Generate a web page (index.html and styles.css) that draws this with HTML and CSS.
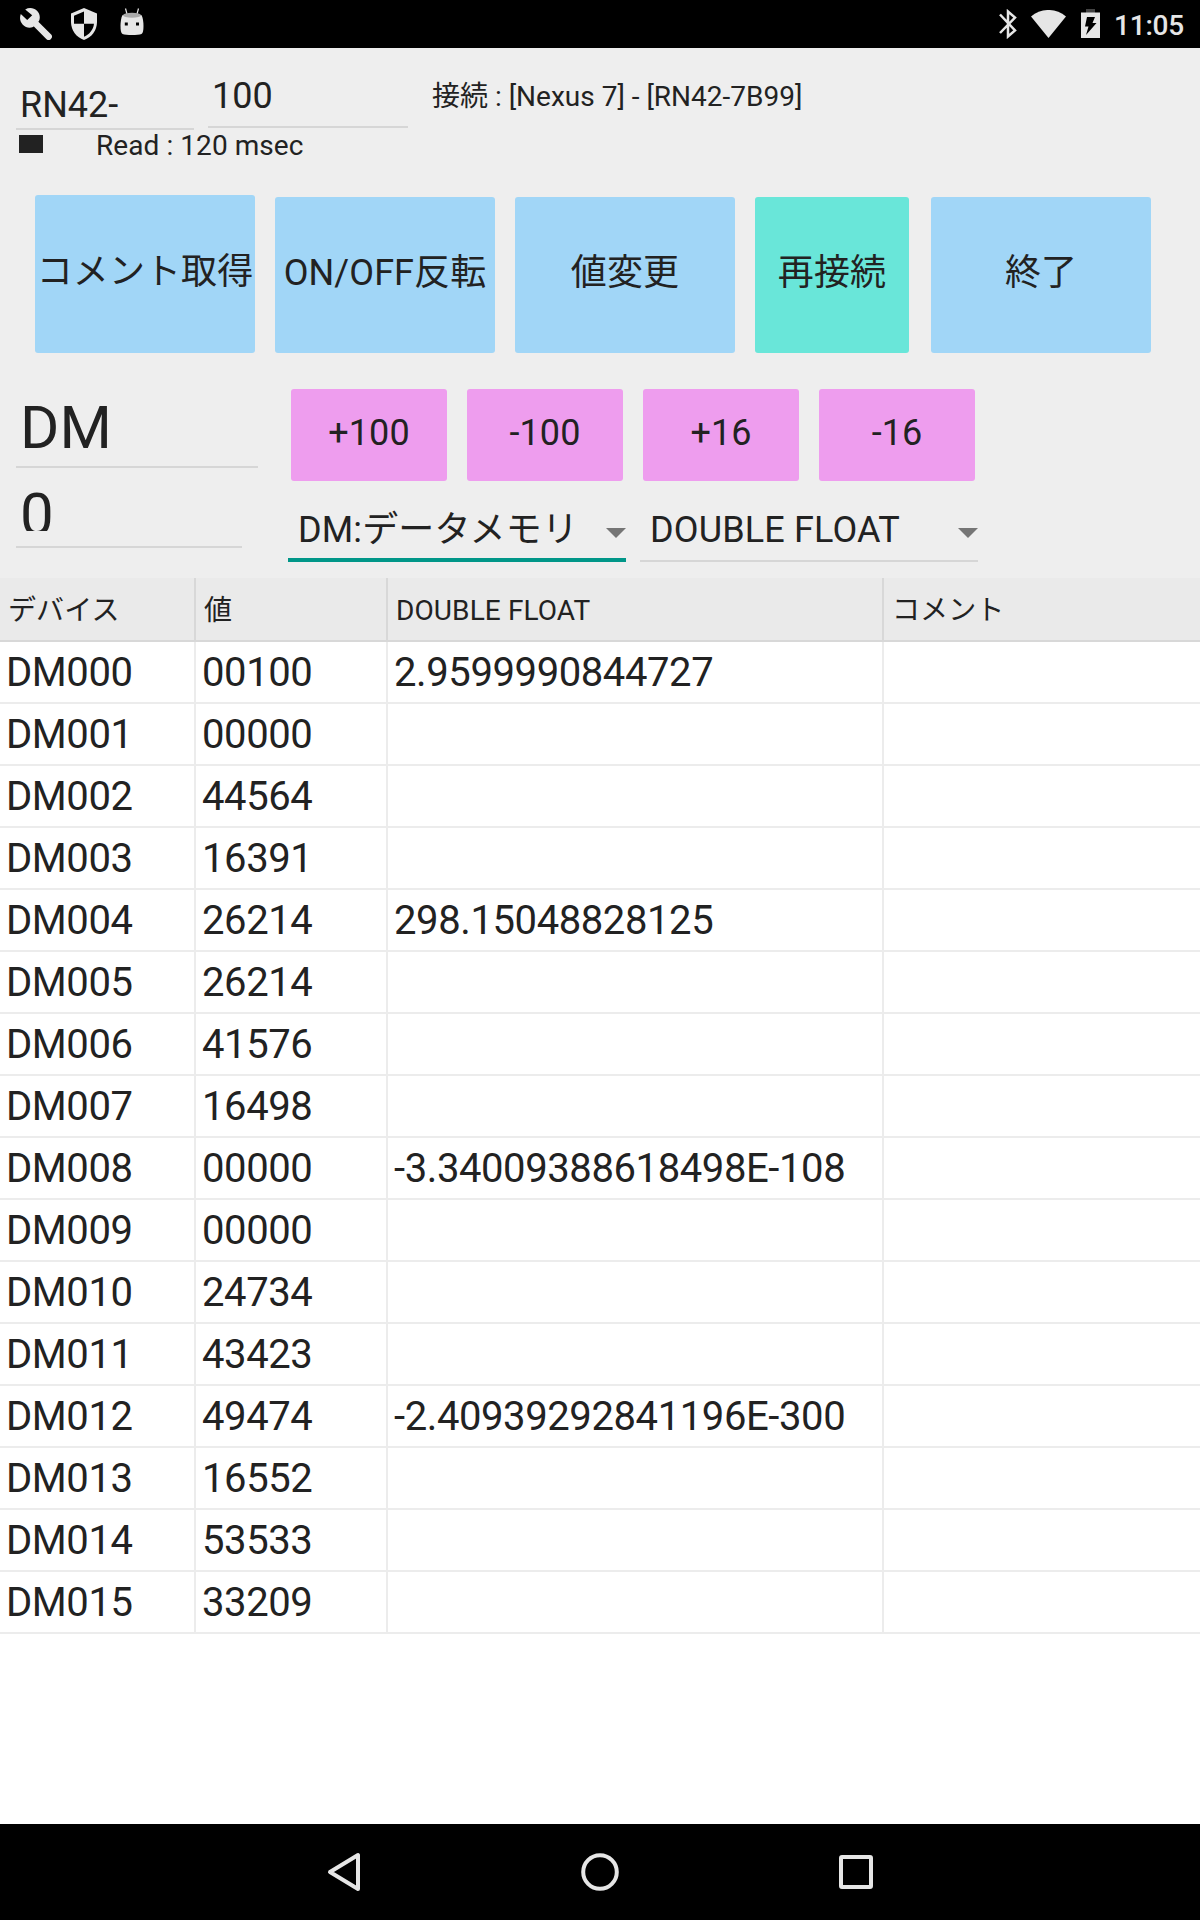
FILE: index.html
```
<!DOCTYPE html>
<html lang="ja">
<head>
    <meta charset="UTF-8">
    <meta name="viewport" content="width=device-width, initial-scale=1.0">
    <title>デバイスモニタ</title>
    <link rel="stylesheet" href="styles.css">
</head>
<body>
    <div class="status-bar">
        <svg class="icon-wrench" width="32" height="32" viewBox="0 0 32 32">
            <path d="M14 14L28.6 28.6" stroke="#e6e6e6" stroke-width="6.6" stroke-linecap="round"/>
            <path d="M5.2 1.5L12.2 7.2L7.2 12L.8 6C-.6 10-.1 13.600 2.800 16.700C5.800 19.800 9.600 20.400 13 19L19 13C20.500 9.400 19.900 5.600 17 2.800C13.700-.4 9-.7 5.200 1.500z" fill="#e6e6e6"/>
        </svg>
        <svg class="icon-shield" width="26" height="32" viewBox="0 0 26 32">
            <path d="M13 0L26 5.500V14C26 22.500 20.500 29.500 13 32C5.500 29.500 0 22.500 0 14V5.500z" fill="#e6e6e6"/>
            <path d="M13 3.500V15.700H3V7.700z"/>
            <path d="M13 15.700H23C22.300 21.500 18.500 26.500 13 28.700z"/>
        </svg>
        <svg class="icon-android" width="24" height="28" viewBox="0 0 24 28">
            <path d="M5.500 .5L7 6M18.500 .5L17 6" stroke="#e6e6e6" stroke-width="1.200"/>
            <path d="M3 7H21C22.500 7 23.500 14 23.500 18C23.500 22 23 25 21.500 26C18 27.300 6 27.300 2.500 26C1 25 .5 22 .5 18C.5 14 1.500 7 3 7z" fill="#e6e6e6"/>
            <ellipse cx="12" cy="7.300" rx="9" ry="2.500" fill="#aaa"/>
            <rect x="4.800" y="14.500" width="3" height="3"/>
            <rect x="16" y="14.500" width="3" height="3"/>
        </svg>
        <div class="status-right">
            <svg class="icon-bluetooth" width="18" height="30" viewBox="0 0 18 30">
                <path d="M1 5.500L16 21.500L9 27.500V2.500L16 8.500L1 24" fill="none" stroke="#e6e6e6" stroke-width="2.500"/>
            </svg>
            <svg class="icon-wifi" width="35" height="28" viewBox="0 0 35 28">
                <path d="M0 6.500C10-2.200 25-2.200 35 6.500L17.500 28z" fill="#e6e6e6"/>
            </svg>
            <svg class="icon-battery" width="19" height="29" viewBox="0 0 19 29">
                <rect x="5" y="0" width="9" height="4" fill="#444"/>
                <rect x="0" y="3.500" width="19" height="25.500" fill="#e6e6e6"/>
                <path d="M6 8H14L11.500 14H15.500L5 26L7.500 17.500H4z"/>
            </svg>
            <span class="clock">11:05</span>
        </div>
    </div>

    <div class="panel">
        <div class="connect">
            <div class="field field-prefix">RN42-</div>
            <div class="field field-number">100</div>
            <div class="connect-status">接続 : [Nexus 7] - [RN42-7B99]</div>
        </div>
        <div class="read">
            <div class="read-mark"></div>
            <div>Read : 120 msec</div>
        </div>

        <div class="commands">
            <button type="button" class="command first">コメント取得</button>
            <button type="button" class="command">ON/OFF反転</button>
            <button type="button" class="command">値変更</button>
            <button type="button" class="command reconnect">再接続</button>
            <button type="button" class="command exit">終了</button>
        </div>

        <div class="address">
            <div class="address-fields">
                <div class="field field-device">DM</div>
                <div class="field field-address"><div class="clip">0</div></div>
            </div>
            <div class="address-tools">
                <div class="steps">
                    <button type="button" class="step">+100</button>
                    <button type="button" class="step">-100</button>
                    <button type="button" class="step">+16</button>
                    <button type="button" class="step">-16</button>
                </div>
                <div class="spinners">
                    <div class="spinner active"><span>DM:データメモリ</span><i class="arrow"></i></div>
                    <div class="spinner"><span>DOUBLE FLOAT</span><i class="arrow"></i></div>
                </div>
            </div>
        </div>
    </div>

    <table>
        <colgroup>
            <col class="col-device">
            <col class="col-value">
            <col class="col-double">
            <col>
        </colgroup>
        <thead>
            <tr><th>デバイス</th><th>値</th><th>DOUBLE FLOAT</th><th>コメント</th></tr>
        </thead>
        <tbody>
            <tr><td>DM000</td><td>00100</td><td>2.9599990844727</td><td></td></tr>
            <tr><td>DM001</td><td>00000</td><td></td><td></td></tr>
            <tr><td>DM002</td><td>44564</td><td></td><td></td></tr>
            <tr><td>DM003</td><td>16391</td><td></td><td></td></tr>
            <tr><td>DM004</td><td>26214</td><td>298.15048828125</td><td></td></tr>
            <tr><td>DM005</td><td>26214</td><td></td><td></td></tr>
            <tr><td>DM006</td><td>41576</td><td></td><td></td></tr>
            <tr><td>DM007</td><td>16498</td><td></td><td></td></tr>
            <tr><td>DM008</td><td>00000</td><td>-3.34009388618498E-108</td><td></td></tr>
            <tr><td>DM009</td><td>00000</td><td></td><td></td></tr>
            <tr><td>DM010</td><td>24734</td><td></td><td></td></tr>
            <tr><td>DM011</td><td>43423</td><td></td><td></td></tr>
            <tr><td>DM012</td><td>49474</td><td>-2.40939292841196E-300</td><td></td></tr>
            <tr><td>DM013</td><td>16552</td><td></td><td></td></tr>
            <tr><td>DM014</td><td>53533</td><td></td><td></td></tr>
            <tr><td>DM015</td><td>33209</td><td></td><td></td></tr>
        </tbody>
    </table>

    <div class="nav-bar">
        <div class="nav-item">
            <svg width="34" height="40" viewBox="0 0 34 40">
                <path d="M31 3V37L3 20z" fill="none" stroke="#e6e6e6" stroke-width="4" stroke-linejoin="round"/>
            </svg>
        </div>
        <div class="nav-item">
            <svg width="38" height="38" viewBox="0 0 38 38">
                <circle cx="19" cy="19" r="16.800" fill="none" stroke="#e6e6e6" stroke-width="4"/>
            </svg>
        </div>
        <div class="nav-item">
            <svg width="34" height="34" viewBox="0 0 34 34">
                <rect x="2" y="2" width="30" height="30" rx="1" fill="none" stroke="#e6e6e6" stroke-width="4" stroke-linejoin="round"/>
            </svg>
        </div>
    </div>
</body>
</html>
```
FILE: styles.css
```
/* ベーススタイル */
* {
    box-sizing: border-box;
}
body {
    display: flex;
    flex-direction: column;
    height: 1920px;
    margin: 0;
    font-family: Roboto, "Noto Sans CJK JP", sans-serif;
    font-size: 36px;
    line-height: 42px;
    color: #222;
    background: #fff;
}
svg {
    display: block;
}

/* ステータスバー */
.status-bar {
    display: flex;
    align-items: flex-start;
    flex: none;
    height: 48px;
    padding: 8px 16px 0 20px;
    background: #000;
}
.icon-shield {
    margin-left: 19px;
}
.icon-android {
    margin-left: 23px;
}
.status-right {
    display: flex;
    margin-left: auto;
}
.icon-bluetooth {
    margin-top: 1px;
}
.icon-wifi {
    margin: 2px 0 0 14px;
}
.icon-battery {
    margin: 1px 0 0 15px;
}
.clock {
    margin: 1px 0 0 14px;
    font-size: 28px;
    font-weight: 500;
    line-height: 33px;
    letter-spacing: -0.2px;
    color: #e6e6e6;
}

/* 操作パネル */
.panel {
    flex: none;
    height: 530px;
    padding-left: 16px;
    background: #eee;
}
.field {
    padding-left: 4px;
    border-bottom: 2px solid #d6d6d6;
}
.connect {
    display: flex;
    align-items: flex-start;
    height: 82px;
}
.field-prefix {
    width: 178px;
    height: 82px;
    padding-top: 36px;
}
.field-number {
    width: 200px;
    height: 80px;
    margin-left: 14px;
    padding-top: 27px;
}
.connect-status {
    margin: 33px 0 0 24px;
    font-size: 28px;
    line-height: 32px;
}
.read {
    display: flex;
    align-items: flex-start;
    height: 65px;
    padding-left: 3px;
    font-size: 28px;
    line-height: 32px;
    letter-spacing: 0.07px;
}
.read-mark {
    width: 24px;
    height: 18px;
    margin: 5px 53px 0 0;
    background: #222;
}

/* ボタン */
button {
    padding: 0 0 4px;
    border: none;
    border-radius: 3px;
    font: inherit;
    letter-spacing: 0.1px;
    color: #222;
    white-space: nowrap;
}
.commands {
    display: flex;
    align-items: flex-end;
    gap: 20px;
    height: 158px;
    padding-left: 19px;
}
.command {
    width: 220px;
    height: 156px;
    background: #a1d6f7;
}
.command.first {
    height: 158px;
}
.command.reconnect {
    width: 154px;
    background: #69e6d9;
}
.command.exit {
    margin-left: 2px;
}

/* アドレス指定 */
.address {
    display: flex;
    margin-top: 36px;
}
.address-fields {
    width: 272px;
    font-size: 60px;
    line-height: 70px;
}
.field-device {
    width: 242px;
    height: 79px;
    padding-top: 4px;
}
.field-address {
    width: 226px;
    height: 80px;
    padding-top: 12px;
}
/* 数字の下端は枠で切れる */
.clip {
    height: 51px;
    overflow: hidden;
}
.steps {
    display: flex;
    gap: 20px;
    padding-left: 3px;
}
.step {
    width: 156px;
    height: 92px;
    background: #ee9dee;
}
.spinners {
    display: flex;
    gap: 14px;
}
.spinner {
    display: flex;
    justify-content: space-between;
    width: 338px;
    height: 81px;
    padding: 28px 0 0 10px;
    letter-spacing: 0.15px;
    border-bottom: 2px solid #d6d6d6;
}
.spinner.active {
    border-bottom: 4px solid #009688;
}
.arrow {
    height: 0;
    margin-top: 19px;
    border: 10px solid transparent;
    border-top-color: #757575;
    border-bottom: none;
}

/* デバイス一覧 */
table {
    width: 100%;
    table-layout: fixed;
    border-collapse: separate;
    border-spacing: 0;
}
.col-device {
    width: 196px;
}
.col-value {
    width: 192px;
}
.col-double {
    width: 496px;
}
th {
    height: 64px;
    padding: 3px 0 0 8px;
    font-size: 28px;
    font-weight: normal;
    line-height: 32px;
    letter-spacing: 0.1px;
    text-align: left;
    background: #eaeaea;
    border-right: 2px solid #d8d8d8;
    border-bottom: 2px solid #d8d8d8;
}
td {
    height: 62px;
    padding: 0 0 0 6px;
    font-size: 40px;
    line-height: 47px;
    letter-spacing: -0.4px;
    white-space: nowrap;
    border-right: 2px solid #ececec;
    border-bottom: 2px solid #ececec;
}
th:last-child, td:last-child {
    border-right: none;
}

/* ナビゲーションバー */
.nav-bar {
    display: flex;
    flex: none;
    justify-content: center;
    height: 96px;
    margin-top: auto;
    background: #000;
}
.nav-item {
    display: flex;
    align-items: center;
    justify-content: center;
    width: 256px;
}
```
